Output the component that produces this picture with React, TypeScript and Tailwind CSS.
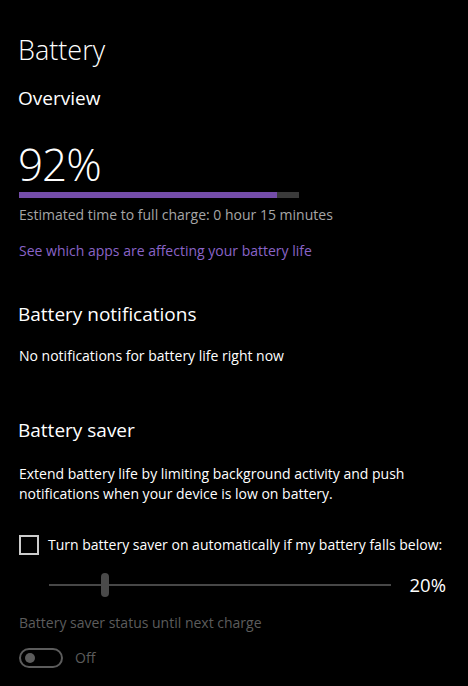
import React from 'react';

const font = { fontFamily: '"Open Sans", "Noto Sans", sans-serif' };

export default function App() {
  return (
    <div
      className="flex h-[686px] w-[468px] flex-col overflow-hidden bg-black pl-[18px] pr-[22px] text-white"
      style={font}
    >
      {/* Header */}
      <h1 className="mt-[32px] text-[27px] leading-[36px] font-light">Battery</h1>
      <h2 className="mt-[17px] text-[19px] leading-[26px]">Overview</h2>

      {/* Level */}
      <div className="mt-[28px] text-[44px] leading-[50px] font-light tracking-[-1px]">92%</div>
      <div className="mt-[3px] ml-px flex h-[6px] w-[280px] bg-[#3a3a3a]">
        <div className="h-full w-[92%] bg-[#744da9]" />
      </div>
      <p className="mt-[7px] ml-px text-[14px] leading-[20px] text-[#a6a6a6]">
        Estimated time to full charge: 0 hour 15 minutes
      </p>
      <a className="mt-[16px] ml-px text-[14px] leading-[20px] text-[#8a64c8]">
        See which apps are affecting your battery life
      </a>

      {/* Notifications */}
      <h2 className="mt-[40px] text-[19px] leading-[26px]">Battery notifications</h2>
      <p className="mt-[19px] ml-px text-[14px] leading-[20px]">
        No notifications for battery life right now
      </p>

      {/* Saver */}
      <h2 className="mt-[51px] text-[19px] leading-[26px]">Battery saver</h2>
      <p className="mt-[21px] ml-px text-[14px] leading-[20px]">
        Extend battery life by limiting background activity and push notifications when your device
        is low on battery.
      </p>

      <label className="mt-[31px] ml-px flex items-center gap-[9px]">
        <span className="h-[20px] w-[20px] border-2 border-[#cccccc]" />
        <span className="text-[14px] leading-[20px]">
          Turn battery saver on automatically if my battery falls below:
        </span>
      </label>

      <div className="mt-[17px] ml-[31px] flex items-center">
        <div className="relative flex h-[26px] w-[342px] items-center">
          <div className="h-[2px] w-full bg-[#474747]" />
          <div className="absolute top-px left-[52px] h-[24px] w-[8px] rounded-full bg-[#4a4a4a]" />
        </div>
        <span className="ml-auto text-[18.5px] leading-[24px]">20%</span>
      </div>

      <p className="mt-[15px] ml-px text-[14px] leading-[20px] text-[#5c5c5c]">
        Battery saver status until next charge
      </p>
      <div className="mt-[15px] ml-px flex items-center gap-[12px]">
        <span className="flex h-[20px] w-[44px] items-center rounded-full border-2 border-[#5c5c5c] pl-[4px]">
          <span className="h-[10px] w-[10px] rounded-full bg-[#5c5c5c]" />
        </span>
        <span className="text-[14px] leading-[20px] text-[#5c5c5c]">Off</span>
      </div>
    </div>
  );
}
